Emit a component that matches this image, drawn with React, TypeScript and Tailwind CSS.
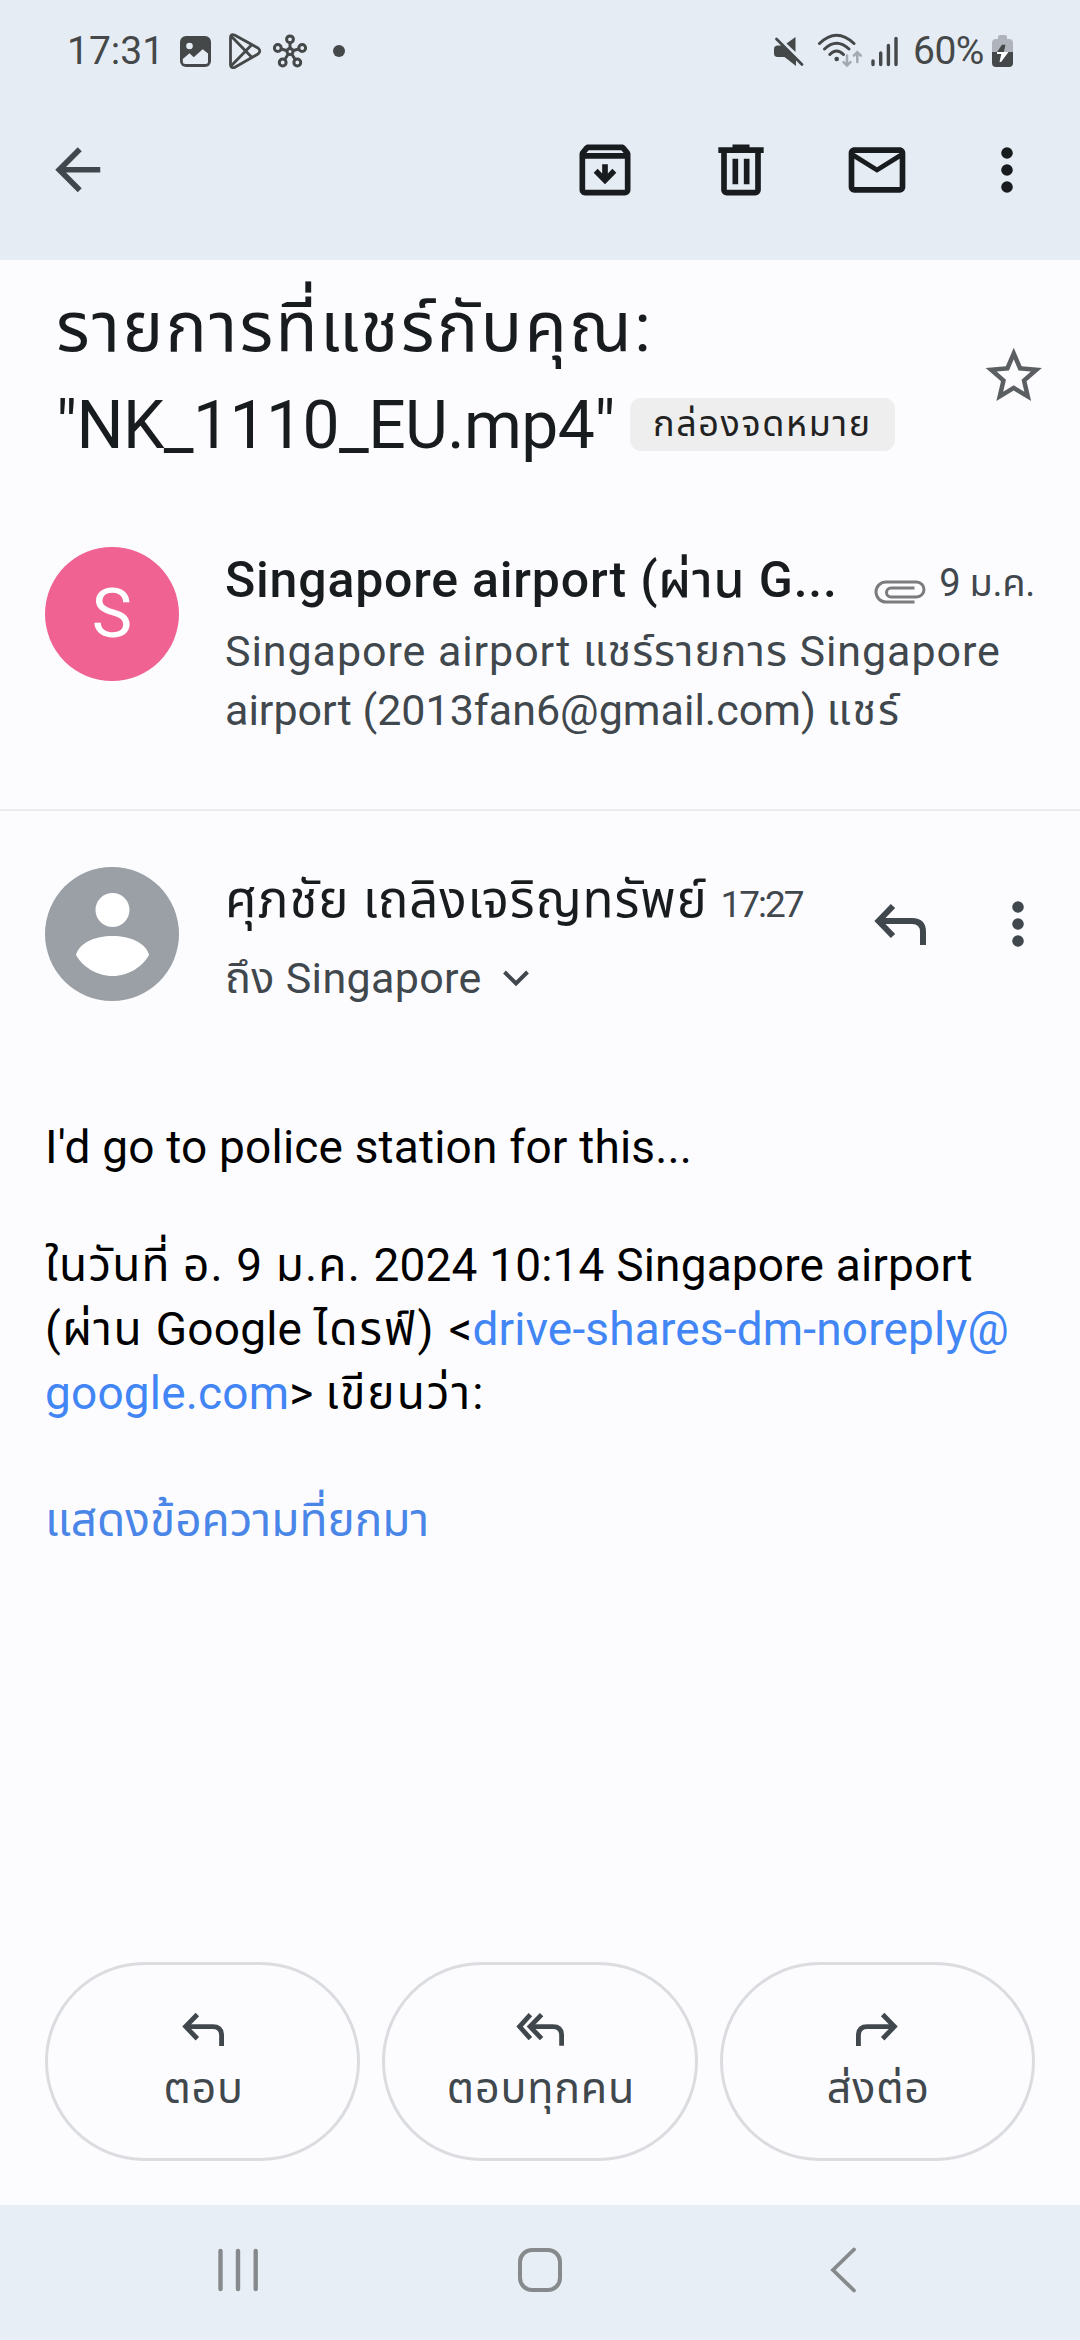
import React from 'react';

type IconProps = { className?: string };

// Status bar icons
function ImageIcon() {
  return (
    <svg className="w-[31px] h-[31px]" viewBox="0 0 31 31" fill="none">
      <rect width="31" height="31" rx="6" fill="#454849" />
      <circle cx="9.5" cy="10" r="3.3" fill="#e5ecf4" />
      <path d="M2.8 23 L9.5 17.3 L13.7 21.3 L22.7 13.2 L28 17.5 V25.5 Q28 28 25.5 28 H5.3 Q2.8 28 2.8 25.5 Z" fill="#e5ecf4" />
    </svg>
  );
}

function PlayStoreIcon() {
  return (
    <svg className="w-[34px] h-[36px]" viewBox="0 0 34 36" fill="none" stroke="#454849" strokeWidth="2.8" strokeLinejoin="round">
      <path d="M2.5 4.5 Q2.5 .8 6.5 2 L30 15 Q33.5 18 30 21 L6.5 34.5 Q2.5 35.5 2.5 31.5 Z" />
      <path d="M3.5 3.5 L24 24.5 M3.5 32.5 L24 11.5" />
    </svg>
  );
}

function HubIcon() {
  return (
    <svg className="w-[34px] h-[34px]" viewBox="0 0 34 34" fill="none" stroke="#454849" strokeWidth="3">
      <circle cx="17" cy="17.5" r="3" />
      <circle cx="17" cy="5.3" r="3.4" />
      <circle cx="4.8" cy="14" r="3.4" />
      <circle cx="29.2" cy="14" r="3.4" />
      <circle cx="9.7" cy="28.5" r="3.4" />
      <circle cx="24.3" cy="28.5" r="3.4" />
      <path d="M17 9 V14 M8.3 15 L13.5 16.5 M25.7 15 L20.5 16.5 M11.8 25.5 L15 20.5 M22.2 25.5 L19 20.5" />
    </svg>
  );
}

function MuteIcon() {
  return (
    <svg className="w-[31px] h-[31px]" viewBox="0 0 31 31" fill="#454849">
      <path d="M5 9.5 H9 L23 23 V30 L11.5 21 H4 Q1 20.5 1 17.5 V13 Q1 9.5 5 9.5 Z" />
      <path d="M22.5 1 V16 L13.5 7.5 Z" />
      <path d="M3.5 3 L29 28.5" stroke="#454849" strokeWidth="2.8" strokeLinecap="round" />
    </svg>
  );
}

function WifiIcon() {
  return (
    <svg className="w-[46px] h-[36px]" viewBox="0 0 46 36" fill="none" strokeWidth="3" strokeLinecap="round">
      <g stroke="#454849">
        <path d="M2.5 10.5 Q19.5 -6 37 10.5" />
        <path d="M7.5 16 Q19.5 4.5 32 16" />
        <path d="M12.8 21.5 Q19.5 14.5 26.5 21.5" />
      </g>
      <circle cx="19.7" cy="26" r="2.3" fill="#454849" />
      <g stroke="#a5a9b1" strokeWidth="2.5">
        <path d="M30 22.5 V32 M26.5 29.2 L30 32.5 L33.5 29.2" />
        <path d="M40.3 29 V20 M36.8 22.6 L40.3 19.3 L43.8 22.6" />
      </g>
    </svg>
  );
}

function SignalIcon() {
  return (
    <svg className="w-[28px] h-[31px]" viewBox="0 0 28 31" stroke="#454849" strokeWidth="3.4" strokeLinecap="round">
      <path d="M2 25 V28.5 M9.7 17 V28.5 M17.4 9.5 V28.5 M25 2.5 V28.5" />
    </svg>
  );
}

function BatteryIcon() {
  return (
    <svg className="w-[21px] h-[32px]" viewBox="0 0 21 32">
      <path d="M6 2 Q6 0 8 0 H13 Q15 0 15 2 V4 H17 Q21 4 21 8 V17 H0 V8 Q0 4 4 4 H6 Z" fill="#afb4bc" />
      <path d="M0 17 H21 V28 Q21 32 17 32 H4 Q0 32 0 28 Z" fill="#454849" />
      <path d="M10 9.8 H13.5 L11.8 17 H5 Z" fill="#454849" />
      <path d="M5 17 H16.5 L9 27 H7.5 L9.3 19 H5 Z" fill="#fff" />
    </svg>
  );
}

// Toolbar icons, 24 unit grid
function BackIcon() {
  return (
    <svg className="w-[67.5px] h-[67.5px]" viewBox="0 0 24 24" fill="#41484d">
      <path d="M20 11H7.83l5.59-5.59L12 4l-8 8 8 8 1.41-1.41L7.83 13H20v-2z" />
    </svg>
  );
}

function ArchiveIcon() {
  return (
    <svg className="w-[68px] h-[68px]" viewBox="0 0 24 24" fill="#191c1e">
      <path d="M20.54 5.23l-1.39-1.68C18.88 3.21 18.47 3 18 3H6c-.47 0-.88.21-1.16.55L3.46 5.23C3.17 5.57 3 6.02 3 6.5V19c0 1.1.9 2 2 2h14c1.1 0 2-.9 2-2V6.5c0-.48-.17-.93-.46-1.27zM6.24 5h11.52l.83 1H5.42l.82-1zM5 19V8h14v11H5zm6-9v3.2l-1.6-1.6L8 13l4 4 4-4-1.4-1.4-1.6 1.6V10z" />
    </svg>
  );
}

function TrashIcon() {
  return (
    <svg className="w-[68px] h-[68px]" viewBox="0 0 24 24" fill="#191c1e">
      <path d="M15 4V3H9v1H4v2h1v13c0 1.1.9 2 2 2h10c1.1 0 2-.9 2-2V6h1V4h-5zm2 15H7V6h10v13zM9 8h2v9H9zm4 0h2v9h-2z" />
    </svg>
  );
}

function MailIcon() {
  return (
    <svg className="w-[68px] h-[68px]" viewBox="0 0 24 24" fill="#191c1e">
      <path d="M20 4H4c-1.1 0-2 .9-2 2v12c0 1.1.9 2 2 2h16c1.1 0 2-.9 2-2V6c0-1.1-.9-2-2-2zm0 14H4V8l8 5 8-5v10zm-8-7L4 6h16l-8 5z" />
    </svg>
  );
}

function MoreIcon({ className }: IconProps) {
  return (
    <svg className={className} viewBox="0 0 24 24" fill="currentColor">
      <circle cx="12" cy="6" r="2.05" />
      <circle cx="12" cy="12" r="2.05" />
      <circle cx="12" cy="18" r="2.05" />
    </svg>
  );
}

function StarIcon() {
  return (
    <svg className="w-[67.5px] h-[67.5px]" viewBox="0 0 24 24" fill="#5b5f62">
      <path d="M22 9.24l-7.19-.62L12 2 9.19 8.63 2 9.24l5.46 4.73L5.82 21 12 17.27 18.18 21l-1.63-7.03L22 9.24zM12 15.4l-3.76 2.27 1-4.28-3.32-2.88 4.38-.38L12 6.1l1.71 4.04 4.38.38-3.32 2.88 1 4.28L12 15.4z" />
    </svg>
  );
}

function ClipIcon() {
  return (
    <svg className="w-[52px] h-[24px]" viewBox="0 0 52 24" fill="none" stroke="#7b7b7b" strokeWidth="3">
      <path d="M40.5 22 H12 A10 10 0 0 1 12 2 H42.5 A7.5 7.5 0 0 1 42.5 17 H17 A4.5 4.5 0 0 1 17 8 H40.5" />
    </svg>
  );
}

function ReplyIcon({ className }: IconProps) {
  return (
    <svg className={className} viewBox="0 0 52 42" fill="none" stroke="#41484d" strokeWidth="6">
      <path d="M19 3 L4.5 18 L19 33" />
      <path d="M4.5 18 H38 Q49 18 49 29 V42" />
    </svg>
  );
}

function ReplyAllIcon({ className }: IconProps) {
  return (
    <svg className={className} viewBox="0 0 60 42" fill="none" stroke="#41484d" strokeWidth="6">
      <path d="M18 3 L4.5 18 L18 33" />
      <path d="M32 3 L17.5 18 L32 33" />
      <path d="M17.5 18 H46 Q57 18 57 29 V42" />
    </svg>
  );
}

function ForwardIcon({ className }: IconProps) {
  return (
    <svg className={className} viewBox="0 0 52 42" fill="none" stroke="#41484d" strokeWidth="6">
      <path d="M33 3 L47.5 18 L33 33" />
      <path d="M47.5 18 H14 Q3 18 3 29 V42" />
    </svg>
  );
}

const actions = [
  { label: 'ตอบ', icon: <ReplyIcon className="w-[42px] h-[34px]" /> },
  { label: 'ตอบทุกคน', icon: <ReplyAllIcon className="w-[48px] h-[34px]" /> },
  { label: 'ส่งต่อ', icon: <ForwardIcon className="w-[42px] h-[34px]" /> },
];

export default function App() {
  return (
    <div className="w-[1080px] h-[2340px] bg-[#fcfcff] flex flex-col overflow-hidden whitespace-nowrap font-[Roboto,'Noto_Sans_Thai','Noto_Sans',sans-serif] text-[#191c1e]">
      <header className="h-[260px] shrink-0 bg-[#e5ecf4]">
        {/* Status bar */}
        <div className="h-[102px] flex items-center text-[39px] text-[#454849]">
          <span className="ml-[67px] w-[113px]">17:31</span>
          <ImageIcon />
          <div className="ml-[17px]"><PlayStoreIcon /></div>
          <div className="ml-[11px]"><HubIcon /></div>
          <div className="ml-[26px] w-3 h-3 rounded-full bg-[#454849]" />
          <div className="ml-auto"><MuteIcon /></div>
          <div className="ml-[13px]"><WifiIcon /></div>
          <div className="ml-[8px]"><SignalIcon /></div>
          <span className="ml-[14px] w-[79px] tracking-[-0.5px]">60%</span>
          <div className="mr-[67px]"><BatteryIcon /></div>
        </div>
        {/* Toolbar */}
        <div className="h-[136px] flex items-center">
          <button className="ml-[44px]"><BackIcon /></button>
          <button className="ml-auto"><ArchiveIcon /></button>
          <button className="ml-[68px]"><TrashIcon /></button>
          <button className="ml-[68px]"><MailIcon /></button>
          <button className="ml-[62px] mr-[39px]"><MoreIcon className="w-[68px] h-[68px]" /></button>
        </div>
      </header>

      <main className="flex-1 flex flex-col">
        {/* Subject */}
        <section className="h-[250px] flex justify-between pt-[19px] pl-[56px] pr-[33px]">
          <h1 className="text-[66px] leading-[98px] font-normal">
            <div className="text-[69px] tracking-[2.3px]">รายการที่แชร์กับคุณ:</div>
            <div className="flex items-center">
              <span className="tracking-[-0.6px]">"NK_1110_EU.mp4"</span>
              <span className="ml-[15px] mb-[4px] h-[53px] w-[265px] rounded-[11px] bg-[#eeeeee] text-[36px] tracking-[1.6px] leading-[53px] text-center text-[#222]">กล่องจดหมาย</span>
            </div>
          </h1>
          <button className="mt-[63px] h-[68px]"><StarIcon /></button>
        </section>

        {/* Collapsed message */}
        <section className="h-[301px] flex pt-[37px] pl-[45px] pr-[45px] border-b-2 border-[#ebecef]">
          <div className="w-[134px] h-[134px] shrink-0 rounded-full bg-[#f06292] text-white text-[68px] flex items-center justify-center">S</div>
          <div className="ml-[46px] flex-1">
            <div className="flex h-[66px] items-center leading-[66px]">
              <span className="text-[50px] font-medium tracking-[0.8px]">Singapore airport (ผ่าน G...</span>
              <div className="ml-auto mt-[24px]"><ClipIcon /></div>
              <span className="ml-[13px] mt-[6px] text-[38px] tracking-[-0.3px] text-[#41484d]">9 ม.ค.</span>
            </div>
            <p className="mt-[9px] text-[43px] leading-[59px] text-[#41484d]">
              <span className="tracking-[0.93px]">Singapore airport แชร์รายการ Singapore</span><br />
              airport (2013fan6@gmail.com) <span className="tracking-[2px]">แชร์</span>
            </p>
          </div>
        </section>

        {/* Open message header */}
        <section className="h-[250px] flex pt-[56px] pl-[45px]">
          <div className="w-[134px] h-[134px] rounded-full bg-[#9aa0a6]">
            <svg className="w-full h-full" viewBox="0 0 134 134" fill="#fff">
              <circle cx="67.5" cy="43" r="17" />
              <path d="M31 88 C34 76 50 69 67.5 69 S101 76 104 88 C98 99 84 109 67.5 109 S37 99 31 88 Z" />
            </svg>
          </div>
          <div className="ml-[46px]">
            <div className="flex h-[66px] items-baseline leading-[66px]">
              <span className="text-[51px] tracking-[0.8px]">ศุภชัย เถลิงเจริญทรัพย์</span>
              <span className="ml-[13px] text-[37px] tracking-[-2px] text-[#41484d]">17:27</span>
            </div>
            <div className="mt-[14px] flex items-center text-[43px] leading-[62px] text-[#41484d]">
              <span className="tracking-[0.35px]">ถึง Singapore</span>
              <svg className="ml-[21px] w-[26px] h-[17px]" viewBox="0 0 26 17" fill="none" stroke="#41484d" strokeWidth="4">
                <path d="M1.5 2 L13 13.5 L24.5 2" />
              </svg>
            </div>
          </div>
          <div className="ml-auto mr-[28px] flex h-[114px] items-center">
            <ReplyIcon className="w-[52px] h-[42px]" />
            <MoreIcon className="ml-[58px] w-[68px] h-[68px] text-[#41484d]" />
          </div>
        </section>

        {/* Body */}
        <section className="flex-1 pt-[54px] pl-[45px] text-[46px] leading-[64px] tracking-[0.18px] text-black">
          <p>I'd go to police station for this...</p>
          <p className="mt-[54px]">
            <span className="tracking-[1.1px]">ในวันที่ อ. 9 ม.ค. </span>2024 10:14 Singapore airport<br />
            <span className="tracking-[1.4px]">(ผ่าน </span>Google <span className="tracking-[2px]">ไดรฟ์) </span>&lt;<a className="text-[#4285f4]">drive-shares-dm-noreply@<br />google.com</a>&gt; <span className="tracking-[2px]">เขียนว่า:</span>
          </p>
          <a className="mt-[63px] block tracking-normal text-[#4a86e8]">แสดงข้อความที่ยกมา</a>
        </section>

        {/* Reply actions */}
        <div className="grid grid-cols-3 gap-[22px] px-[45px] pb-[44px]">
          {actions.map(a => (
            <button key={a.label} className="h-[199px] rounded-full border-[3px] border-[#dadce0] flex flex-col items-center pt-[47px] text-[#41484d] text-[43px] leading-[60px] tracking-[0.8px]">
              {a.icon}
              <span className="mt-[12px] pl-[2px]">{a.label}</span>
            </button>
          ))}
        </div>
      </main>

      {/* System navigation */}
      <nav className="h-[135px] shrink-0 bg-[#e7eef5] flex items-center pb-[5px] pl-[216px]">
        <svg className="w-[44px] h-[46px]" viewBox="0 0 44 46" stroke="#868a8d" strokeWidth="4.4" strokeLinecap="round">
          <path d="M4.5 4 V42 M22 4 V42 M39.7 4 V42" />
        </svg>
        <svg className="ml-[257px] w-[46px] h-[46px]" viewBox="0 0 46 46" fill="none" stroke="#868a8d" strokeWidth="4">
          <rect x="3" y="3" width="40" height="40" rx="12" />
        </svg>
        <svg className="ml-[265px] w-[32px] h-[48px]" viewBox="0 0 32 48" fill="none" stroke="#868a8d" strokeWidth="3.8" strokeLinecap="round">
          <path d="M26 3.5 L5 24 L26 44.5" />
        </svg>
      </nav>
    </div>
  );
}
